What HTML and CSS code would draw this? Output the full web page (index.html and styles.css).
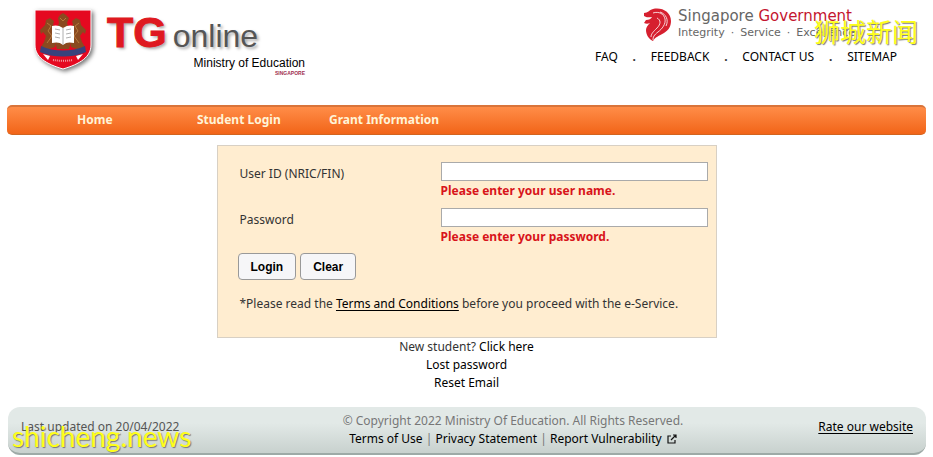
FILE: index.html
```html
<!DOCTYPE html>
<html lang="en">
<head>
<meta charset="utf-8">
<title>TG online</title>
<link rel="stylesheet" href="styles.css">
</head>
<body>
<header class="header">
  <div class="brand">
    <svg class="crest" viewBox="0 0 64 68" aria-hidden="true">
      <path d="M2 2h56v35c0 12-11 19-28 24C13 56 2 49 2 37z" fill="#e50920" stroke="#fff" stroke-width="1"/>
      <g fill="#8a4a20">
        <path d="M25 10l2-3 3-2 3 2 3 3-2 5 2 5H24l2-5z"/>
        <path d="M13 12l4-2 4 3-1 4 3 3-2 5 3 5-2 9-9 3-5-3 3-5 2-6-3-4-2 2-1-4 5-5z"/>
        <path d="M47 12l-4-2-4 3 1 4-3 3 2 5-3 5 2 9 9 3 5-3-3-5-2-6 3-4 2 2 1-4-5-5z"/>
        <path d="M22 34h16l-2 7H24z"/>
      </g>
      <g fill="none" stroke="#c98f4a" stroke-width=".7"><path d="M14 15l4 3-3 5 4 5-5 7M46 15l-4 3 3 5-4 5 5 7M27 10l3 3 3-3"/></g>
      <path d="M30 20c-4-3-8-3-11-2v17c4-1 8-1 11 2 3-3 7-3 11-2V18c-3-1-7-1-11 2z" fill="#fff"/>
      <path d="M30 20v17M22 21l5 1M22 25l5 1M22 29l5 1M38 21l-5 1M38 25l-5 1M38 29l-5 1" stroke="#999" fill="none" stroke-width=".8"/>
      <path d="M8 38c13 6 31 6 44 0l1 6c-13 6-33 6-46 0z" fill="#39427c"/>
      <path d="M10 46l7 2-2 4zM50 46l-7 2 2 4z" fill="#fff"/>
      <path d="M20 52c6 1 14 1 20 0" stroke="#f0a0a4" stroke-width="2" stroke-dasharray="1 1" fill="none"/>
    </svg>
    <div class="wordmark">
      <div class="title"><span class="tg">TG</span><span class="online">online</span></div>
      <div class="ministry">Ministry of Education</div>
      <div class="country">SINGAPORE</div>
    </div>
  </div>
  <div class="top">
    <div class="gov">
      <svg class="lion" viewBox="0 0 30 34" aria-hidden="true">
        <path d="M1 5c4 0 5-3 9-4 9-2 18 3 18 12 0 5-2 9-7 12-5 3-9 4-11 8-4-2-7-6-7-11 0-3 2-5 4-7-2 1-4 1-6 0l2-3c3 0 5-1 6-3-3 0-5 1-8-1z" fill="#d6202f"/>
        <path d="M10 5c6-2 11 1 12 6s-3 10-7 13-5 5-5 8M14 10c4 2 4 6 0 10s-6 6-6 9M17 4c6 2 9 8 6 14" fill="none" stroke="#fff" stroke-width=".8"/>
      </svg>
      <div>
        <div class="govname">Singapore <span>Government</span></div>
        <div class="motto"><span>Integrity</span><span>·</span><span>Service</span><span>·</span><span>Excellence</span></div>
      </div>
      <div class="mark-cn" lang="zh">狮城新闻</div>
    </div>
    <nav class="links"><a href="#">FAQ</a><span>.</span><a href="#">FEEDBACK</a><span>.</span><a href="#">CONTACT US</a><span>.</span><a href="#">SITEMAP</a></nav>
  </div>
</header>
<nav class="menu"><a href="#">Home</a><a href="#">Student Login</a><a href="#">Grant Information</a></nav>
<main>
  <form class="panel">
    <div class="row"><label for="user">User ID (NRIC/FIN)</label><div class="field"><input id="user" type="text"><p class="error">Please enter your user name.</p></div></div>
    <div class="row"><label for="pass">Password</label><div class="field"><input id="pass" type="password"><p class="error">Please enter your password.</p></div></div>
    <div class="buttons"><button type="button">Login</button><button type="reset">Clear</button></div>
    <p class="terms">*Please read the <a href="#">Terms and Conditions</a> before you proceed with the e-Service.</p>
  </form>
  <div class="help"><div>New student? <a href="#">Click here</a></div><div><a href="#">Lost password</a></div><div><a href="#">Reset Email</a></div></div>
</main>
<footer class="footer">
  <div class="updated">Last updated on 20/04/2022</div>
  <div class="legal">
    <div>© Copyright 2022 Ministry Of Education. All Rights Reserved.</div>
    <div><a href="#">Terms of Use</a> | <a href="#">Privacy Statement</a> | <a href="#">Report Vulnerability <svg class="ext" viewBox="0 0 10 10" aria-hidden="true"><path d="M4 2H1v7h7V6M6 1h3v3M9 1L4 6" fill="none" stroke="#111" stroke-width="1.2"/></svg></a></div>
  </div>
  <div class="rate"><a href="#">Rate our website</a></div>
  <div class="mark-en">shicheng.news</div>
</footer>
</body>
</html>
```
FILE: styles.css
```css
* { box-sizing: border-box; }
body {
  margin: 0;
  padding: 0 7px;
  background: #fff;
  color: #333;
  font: 12px/18px "Noto Sans", "Open Sans", sans-serif;
}
a { color: #000; text-decoration: none; }
p { margin: 0; }

.header { display: flex; justify-content: space-between; height: 105px; padding: 8px 8px 0 26px; }
.brand { display: flex; gap: 10px; }
.crest { width: 64px; height: 68px; filter: drop-shadow(2px 2px 2px #777); }
.wordmark { width: 198px; text-align: right; font-family: "Liberation Sans", sans-serif; color: #000; }
.title { display: flex; align-items: baseline; gap: 6px; height: 47px; line-height: 48px; text-shadow: 2px 2px 3px #aaa; }
.tg { color: #df1920; font-size: 43px; font-weight: bold; -webkit-text-stroke: 1px #df1920; }
.online { color: #555; font-size: 32px; }
.ministry { font-size: 12px; line-height: 16px; }
.country { color: #a03050; font-size: 5px; font-weight: bold; line-height: 5px; }

.top { display: flex; flex-direction: column; width: 330px; }
.gov { position: relative; display: flex; gap: 5px; padding-left: 55px; font-family: "DejaVu Sans", sans-serif; color: #666; }
.lion { width: 30px; height: 34px; }
.govname { font-size: 15px; line-height: 17px; white-space: nowrap; }
.govname span { color: #c4152f; }
.motto { display: flex; gap: 6px; font-size: 11px; line-height: 15px; }
.mark-cn {
  position: absolute; right: 0; top: 5px;
  color: #ffff1a; font: 26px/36px "Noto Sans CJK SC", sans-serif;
  text-shadow: 1px 1px 1px #777;
}
.links { display: flex; justify-content: space-between; padding: 6px 21px 0 7px; }
.links span { font-weight: bold; }

.menu {
  display: flex; align-items: center; height: 30px; padding: 0 70px;
  border-top: 2px solid #d9743a; border-bottom: 1px solid #d2641f; border-radius: 5px;
  background: linear-gradient(#ff8d48, #f26418);
  line-height: 16px;
}
.menu a { flex: none; width: 132px; padding-bottom: 1px; color: #fff4d8; font-weight: bold; }
.menu a:first-child { width: 120px; }

.panel {
  width: 500px; max-width: 100%; margin: 10px auto 0; padding: 16px 8px 24px 20px;
  border: 1px solid #d8d0c4; background: #ffedd0;
}
.row { display: grid; grid-template-columns: 1fr 267px; height: 46px; padding-left: 2px; }
.row label { padding-top: 3px; }
.field input { display: block; width: 100%; height: 19px; padding: 0 4px; border: 1px solid #aaa; background: #fff; font: inherit; }
.error { color: #d8141a; font-weight: bold; line-height: 20px; }
.buttons { display: flex; gap: 4px; margin-top: -1px; }
.buttons button {
  height: 27px; padding: 0 12px; border: 1px solid #999; border-radius: 4px;
  background: #f6f6f8; color: #000; font: bold 12px "Liberation Sans", sans-serif;
}
.terms { margin-top: 15px; padding-left: 2px; }
.terms a, .rate a { text-decoration: underline; text-underline-offset: 2px; }
.help { text-align: center; }

.footer {
  position: relative; display: grid; grid-template-columns: 7fr auto 5fr;
  height: 48px; margin: 15px 0 0 1px; padding: 5px 13px 0;
  border-bottom: 2px solid #9eaaa7; border-radius: 12px;
  background: linear-gradient(#e2e9e7 35%, #c8d1ce);
  color: #555;
}
.updated, .rate { padding-top: 6px; }
.legal { text-align: center; color: #777; }
.rate { text-align: right; }
.ext { width: 10px; height: 10px; margin-left: 2px; vertical-align: -1px; }
.mark-en {
  position: absolute; left: 4px; top: 13px;
  color: #ffff1a; font: 28px/32px Lato, sans-serif;
  text-shadow: 1px 1px 1px #777;
}
```
